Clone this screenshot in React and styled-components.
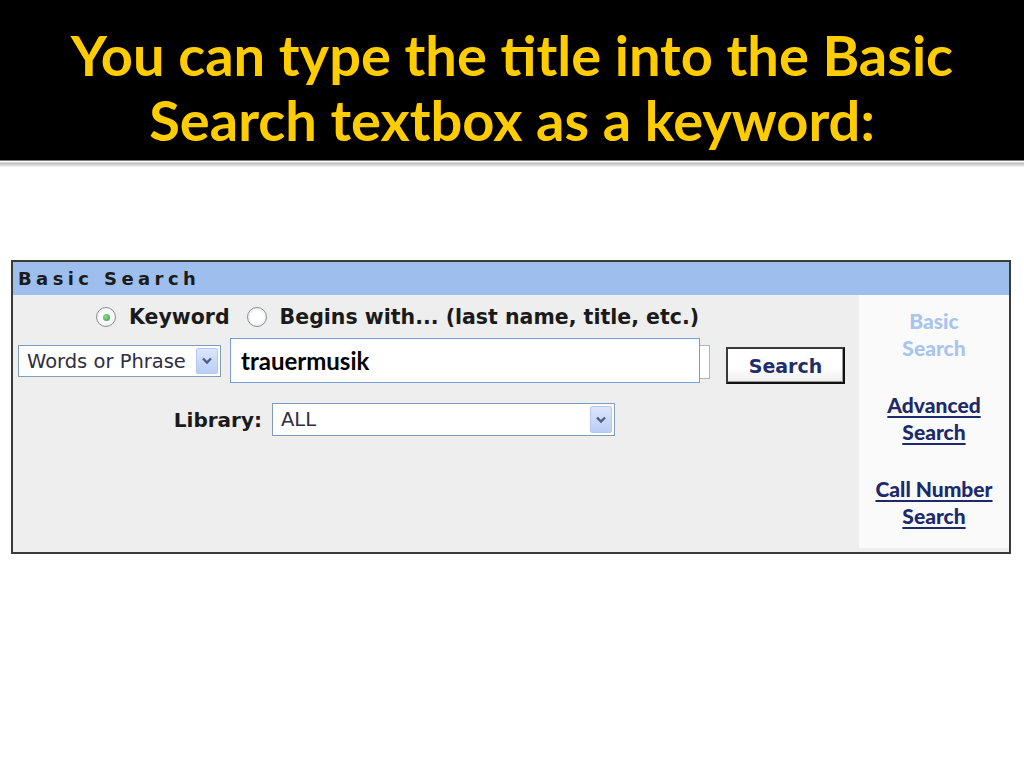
import React from 'react'
import styled, { createGlobalStyle } from 'styled-components'

const GlobalStyle = createGlobalStyle`
  html, body {
    margin: 0;
    padding: 0;
    background: #ffffff;
  }
  body {
    width: 1024px;
    height: 768px;
    overflow: hidden;
    font-family: 'DejaVu Sans', Verdana, sans-serif;
  }
`

const Slide = styled.div`
  width: 1024px;
  height: 768px;
  background: #ffffff;
`

const TitleBar = styled.header`
  height: 160px;
  box-sizing: border-box;
  padding-top: 22px;
  background: #000000;
  color: #ffcc00;
  font-family: Lato, 'Open Sans', sans-serif;
  font-weight: 700;
  font-size: 56px;
  line-height: 65px;
  text-align: center;
`

const Rule = styled.div`
  height: 6px;
  border-top: 1px solid #7a7a7a;
  background: linear-gradient(#ffffff 0 1px, #b9b9b9 2px, #d8d8d8 4px, #f4f4f4 6px);
`

const Panel = styled.section`
  width: 1000px;
  height: 294px;
  box-sizing: border-box;
  margin: 93px 0 0 11px;
  border: 2px solid #3a3a3a;
  display: flex;
  flex-direction: column;
`

const PanelHeader = styled.div`
  height: 33px;
  padding-left: 5px;
  background: #9ebfee;
  color: #1b1b1b;
  font-weight: 700;
  font-size: 18px;
  letter-spacing: 4.4px;
  line-height: 34px;
`

const PanelBody = styled.div`
  flex: 1;
  display: flex;
  background: #eeeeee;
`

const SearchArea = styled.div`
  flex: 1;
  padding: 12px 0 0 5px;
`

const RadioRow = styled.div`
  display: flex;
  align-items: center;
  height: 20px;
  padding-left: 78px;
  font-weight: 700;
  font-size: 20.5px;
  color: #1a1a1a;
`

const Radio = styled.span`
  width: 18px;
  height: 18px;
  border: 1px solid #8a8f96;
  border-radius: 50%;
  background: radial-gradient(circle, #ffffff 40%, #e2e4e8 100%);
  display: flex;
  align-items: center;
  justify-content: center;
  margin: 0 13px 0 ${p => (p.$first ? 0 : 17)}px;

  &::after {
    content: '';
    width: 7px;
    height: 7px;
    border-radius: 50%;
    background: ${p => (p.$checked ? 'radial-gradient(circle at 40% 40%, #8ee08e, #2e9a3c)' : 'transparent')};
  }
`

const QueryRow = styled.div`
  display: flex;
  align-items: flex-start;
  margin-top: 18px;
`

const Select = styled.div`
  width: ${p => p.$width}px;
  height: ${p => p.$height}px;
  box-sizing: border-box;
  border: 1px solid #7f9db9;
  background: #ffffff;
  display: flex;
  align-items: center;
  padding: 2px;
`

const SelectText = styled.span`
  flex: 1;
  padding-left: 6px;
  font-size: 19.5px;
  color: #2e2e3e;
  white-space: nowrap;
`

const Arrow = styled.span`
  width: 22px;
  height: 100%;
  box-sizing: border-box;
  border: 1px solid #b6c8f0;
  border-radius: 2px;
  background: linear-gradient(#dce6fc, #b9cdf6);
  display: flex;
  align-items: center;
  justify-content: center;
`

const FieldWrap = styled.div`
  position: relative;
  margin-left: 9px;
`

const Field = styled.div`
  width: 480px;
  height: 34px;
  box-sizing: border-box;
  border: 1px solid #a9b4c4;
  background: #ffffff;
`

const Callout = styled.div`
  position: absolute;
  top: -7px;
  left: 0;
  width: 470px;
  height: 45px;
  box-sizing: border-box;
  border: 1px solid #7b9dd6;
  background: #ffffff;
  padding-left: 10px;
  font-family: Lato, 'Open Sans', sans-serif;
  font-weight: 700;
  font-size: 24px;
  line-height: 43px;
  color: #000000;
`

const SearchButton = styled.button`
  width: 119px;
  height: 37px;
  margin: 2px 0 0 16px;
  padding: 0;
  box-sizing: border-box;
  border: 2px solid #3a3a3a;
  border-right-color: #111111;
  border-bottom-color: #111111;
  box-shadow: inset -1px -1px 0 #9a9a9a;
  background: linear-gradient(#ffffff 60%, #ececec);
  font-family: 'DejaVu Sans', Verdana, sans-serif;
  font-weight: 700;
  font-size: 19px;
  color: #1f2d6b;
`

const LibraryRow = styled.div`
  display: flex;
  align-items: center;
  gap: 10px;
  margin-top: 19px;
`

const Label = styled.span`
  width: 244px;
  text-align: right;
  font-weight: 700;
  font-size: 20px;
  color: #1a1a1a;
`

const SideNav = styled.nav`
  width: 150px;
  margin-bottom: 4px;
  padding-top: 12px;
  background: #fafafa;
  display: flex;
  flex-direction: column;
  gap: 30px;
  font-family: Lato, 'Open Sans', sans-serif;
  font-weight: 900;
  font-size: 21px;
  line-height: 27px;
  text-align: center;
`

const NavItem = styled.a`
  color: ${p => (p.$current ? '#a9c5ee' : '#1c2a6b')};
  text-decoration: ${p => (p.$current ? 'none' : 'underline')};
  text-decoration-thickness: 2px;
  text-underline-offset: 3px;
`

const Chevron = () => (
  <svg width="12" height="8" viewBox="0 0 12 8">
    <path d="M2 1.5 L6 5.5 L10 1.5" fill="none" stroke="#4b5f86" strokeWidth="2.4" />
  </svg>
)

export default function App() {
  return (
    <Slide>
      <GlobalStyle />
      <TitleBar>
        You can type the title into the Basic
        <br />
        Search textbox as a keyword:
      </TitleBar>
      <Rule />
      <Panel>
        <PanelHeader>Basic Search</PanelHeader>
        <PanelBody>
          <SearchArea>
            <RadioRow>
              <Radio $first $checked />
              Keyword
              <Radio />
              Begins with... (last name, title, etc.)
            </RadioRow>
            <QueryRow>
              <Select $width={203} $height={32}>
                <SelectText>Words or Phrase</SelectText>
                <Arrow>
                  <Chevron />
                </Arrow>
              </Select>
              <FieldWrap>
                <Field />
                <Callout>trauermusik</Callout>
              </FieldWrap>
              <SearchButton>Search</SearchButton>
            </QueryRow>
            <LibraryRow>
              <Label>Library:</Label>
              <Select $width={343} $height={33}>
                <SelectText>ALL</SelectText>
                <Arrow>
                  <Chevron />
                </Arrow>
              </Select>
            </LibraryRow>
          </SearchArea>
          <SideNav>
            <NavItem $current>Basic<br />Search</NavItem>
            <NavItem href="#">Advanced<br />Search</NavItem>
            <NavItem href="#">Call Number<br />Search</NavItem>
          </SideNav>
        </PanelBody>
      </Panel>
    </Slide>
  )
}
